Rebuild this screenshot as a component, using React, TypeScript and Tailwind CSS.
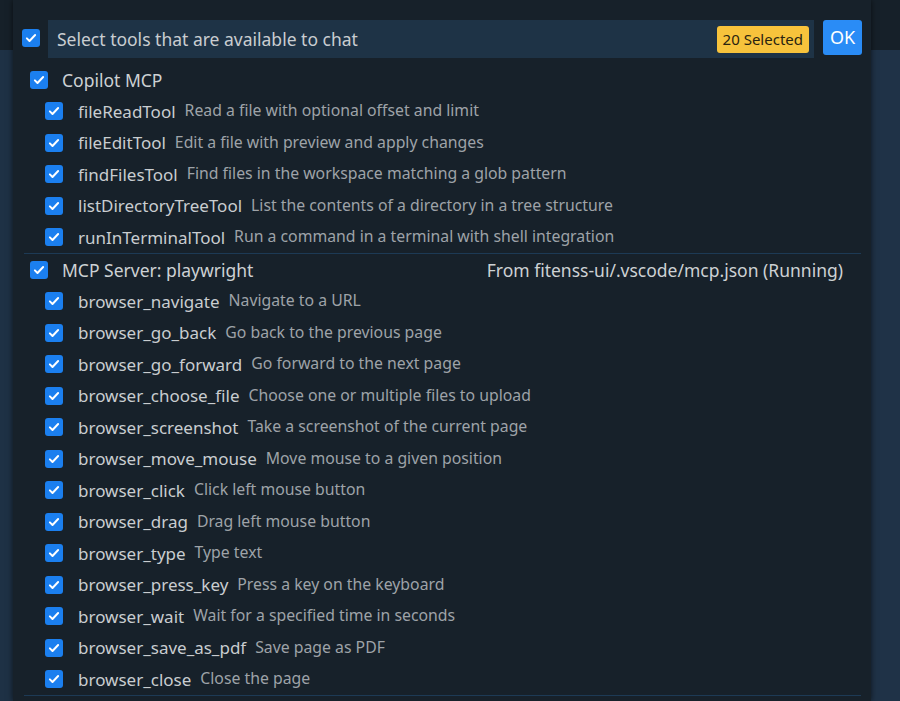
import React from "react";

type Tool = { name: string; desc: string };

const copilotTools: Tool[] = [
  { name: "fileReadTool", desc: "Read a file with optional offset and limit" },
  { name: "fileEditTool", desc: "Edit a file with preview and apply changes" },
  { name: "findFilesTool", desc: "Find files in the workspace matching a glob pattern" },
  { name: "listDirectoryTreeTool", desc: "List the contents of a directory in a tree structure" },
  { name: "runInTerminalTool", desc: "Run a command in a terminal with shell integration" },
];

const playwrightTools: Tool[] = [
  { name: "browser_navigate", desc: "Navigate to a URL" },
  { name: "browser_go_back", desc: "Go back to the previous page" },
  { name: "browser_go_forward", desc: "Go forward to the next page" },
  { name: "browser_choose_file", desc: "Choose one or multiple files to upload" },
  { name: "browser_screenshot", desc: "Take a screenshot of the current page" },
  { name: "browser_move_mouse", desc: "Move mouse to a given position" },
  { name: "browser_click", desc: "Click left mouse button" },
  { name: "browser_drag", desc: "Drag left mouse button" },
  { name: "browser_type", desc: "Type text" },
  { name: "browser_press_key", desc: "Press a key on the keyboard" },
  { name: "browser_wait", desc: "Wait for a specified time in seconds" },
  { name: "browser_save_as_pdf", desc: "Save page as PDF" },
  { name: "browser_close", desc: "Close the page" },
];

function Check() {
  return (
    <span className="flex h-[18px] w-[18px] shrink-0 items-center justify-center rounded-[3px] bg-[#1b7fef]">
      <svg width="12" height="12" viewBox="0 0 16 16" fill="none">
        <path d="M2.5 8.5l3.5 3.5 7.5-8" stroke="#fff" strokeWidth="2.6" strokeLinecap="round" strokeLinejoin="round" />
      </svg>
    </span>
  );
}

function GroupRow({ label, source }: { label: string; source?: string }) {
  return (
    <div className="flex h-[31.5px] items-center pl-[17px] pr-[18px]">
      <Check />
      <span className="ml-[14px] text-[17.5px] text-[#cdd1d4]">{label}</span>
      {source && <span className="ml-auto text-[17.5px] text-[#cdd1d4]">{source}</span>}
    </div>
  );
}

function ToolRow({ tool }: { tool: Tool }) {
  return (
    <div className="flex h-[31.5px] items-center pl-[32px]">
      <Check />
      <span className="ml-[15px] text-[17px] text-[#c9cdd0]">{tool.name}</span>
      <span className="ml-[9px] text-[15.8px] text-[#9ea3a8]">{tool.desc}</span>
    </div>
  );
}

export default function App() {
  return (
    <div
      className="relative h-[701px] w-[900px] overflow-hidden bg-[#162029]"
      style={{ fontFamily: '"Noto Sans", "Open Sans", sans-serif' }}
    >
      <div className="flex h-full flex-col">
        <div className="h-[50px] bg-[#162029]" />
        <div className="flex flex-1">
          <div className="w-[13px] bg-[#1e3145]" />
          <div className="flex-1 bg-[#17212a]" />
          <div className="w-[29px] bg-[#1f3247]" />
        </div>
      </div>

      <div className="absolute left-[13px] top-0 flex h-full w-[858px] flex-col bg-[#17212a] shadow-[0_0_6px_rgba(0,0,0,0.6)]">
        <div className="flex items-start pl-[9px] pt-[20px]">
          <div className="mt-[9px]">
            <Check />
          </div>
          <div className="ml-[8px] flex h-[38px] w-[766px] items-center bg-[#1e3346] pl-[9px] pr-[5px]">
            <span className="text-[17.5px] text-[#c9cdd1]">Select tools that are available to chat</span>
            <span className="ml-auto rounded-[3px] bg-[#f7c33c] px-[6px] py-[2px] text-[15px] leading-[23px] text-[#2a2410]">
              20 Selected
            </span>
          </div>
          <button className="ml-[9px] flex h-[35px] w-[39px] items-center justify-center rounded-[3px] bg-[#2a8cf6] text-[18px] text-white">
            OK
          </button>
        </div>

        <div className="mt-[6px] flex flex-col pr-[10px]">
          <GroupRow label="Copilot MCP" />
          {copilotTools.map((t) => (
            <ToolRow key={t.name} tool={t} />
          ))}
          <div className="ml-[11px] h-px bg-[#1d3a55]" />
          <GroupRow label="MCP Server: playwright" source="From fitenss-ui/.vscode/mcp.json (Running)" />
          {playwrightTools.map((t) => (
            <ToolRow key={t.name} tool={t} />
          ))}
          <div className="ml-[11px] h-px bg-[#1d3a55]" />
        </div>
      </div>
    </div>
  );
}
